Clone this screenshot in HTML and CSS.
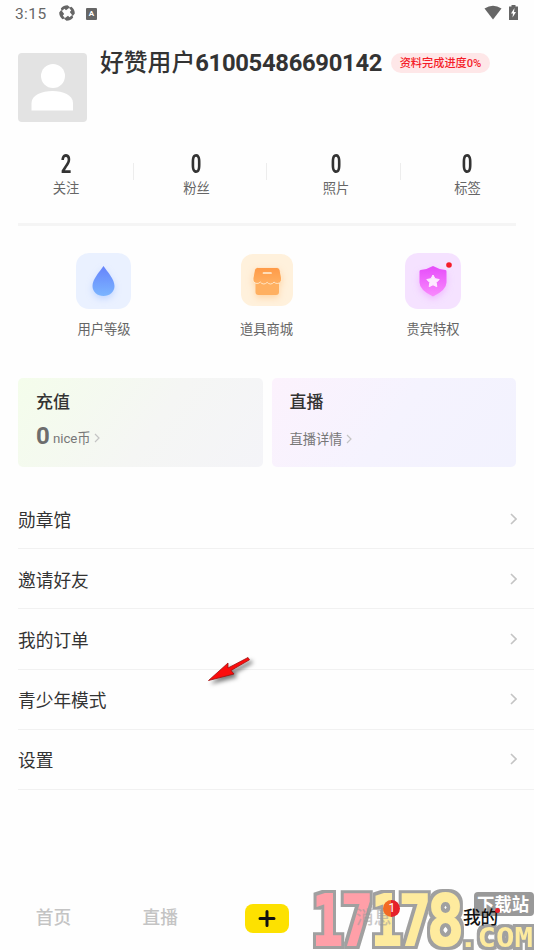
FILE: index.html
```
<!DOCTYPE html>
<html lang="zh-CN">
<head>
<meta charset="utf-8">
<title>我的</title>
<link rel="stylesheet" href="styles.css">
</head>
<body>
<div class="screen">
  <header class="status">
    <span class="time">3:15</span>
    <svg class="sync" viewBox="0 0 16 16"><g fill="#666"><path d="M1.800 3.500Q4.500.2 8.500.2L11 2.200 7 5.200 5.500 3.800 2.800 6z"/><path d="M12.500 1.800Q15.800 4.500 15.800 8.500L13.800 11 10.800 7 12.200 5.500 10 2.800z"/><path d="M14.200 12.500Q11.500 15.800 7.500 15.800L5 13.800 9 10.800 10.500 12.200 13.200 10z"/><path d="M3.500 14.200Q.2 11.500.2 7.500L2.200 5 5.200 9 3.800 10.500 6 13.200z"/></g></svg>
    <span class="abox">A</span>
    <svg class="wifi" viewBox="0 0 18 15"><path d="M.5 3.500Q9-2 17.500 3.500L9 14.500Z" fill="#666"/></svg>
    <svg class="battery" viewBox="0 0 9 15"><path d="M2.500 0h4v1.500H9V15H0V1.500h2.500z" fill="#666"/><path d="M5.500 3L2 8.500h2L3.500 12.500 7 7H5z" fill="#fff"/></svg>
  </header>

  <section class="profile">
    <svg class="avatar" viewBox="0 0 69 69"><rect width="69" height="69" rx="4" fill="#e3e3e3"/><circle cx="35" cy="23" r="12" fill="#fff"/><path d="M13.500 57.500V50C13.500 42 24 38 34.500 38S55 42 55 50v7.500z" fill="#fff"/></svg>
    <h1 class="name"><span class="cn">好赞用户</span><span class="id">61005486690142</span></h1>
    <span class="progress">资料完成进度0%</span>
  </section>

  <section class="stats">
    <div class="stat"><b>2</b><span>关注</span></div>
    <div class="stat second"><b>0</b><span>粉丝</span></div>
    <div class="stat third"><b>0</b><span>照片</span></div>
    <div class="stat"><b>0</b><span>标签</span></div>
  </section>
  <div class="bar"></div>

  <section class="features">
    <div class="feature">
      <div class="tile-box"><svg class="tile" viewBox="0 0 56 56"><defs><linearGradient id="drop" x2="0" y2="1"><stop stop-color="#6683fb"/><stop offset="1" stop-color="#7bb5ff"/></linearGradient></defs><rect width="55" height="56" rx="13" fill="#eaf1ff"/><path class="glow-blue" d="M27.500 13C23.500 19 16.500 26 16.500 33c0 6 5 10 11 10s11-4 11-10c0-7-7-14-11-20z" fill="url(#drop)"/></svg></div>
      <span>用户等级</span>
    </div>
    <div class="feature">
      <div class="tile-box"><svg class="tile small" viewBox="0 0 52 52"><defs><linearGradient id="shop" x2="0" y2="1"><stop stop-color="#ff9a47"/><stop offset="1" stop-color="#ffb062"/></linearGradient></defs><rect width="52" height="52" rx="12" fill="#fff1dc"/><g class="glow-orange"><path d="M14.500 27h23.500v11q0 3-3 3h-17.500q-3 0-3-3z" fill="#ffb061"/><path d="M16.500 13.500H36q2.500 0 3 2.500l1.500 8q.5 5-4 5.500-2.300 0-3.500-1.500-1.500 2-3.500 2t-3.300-1.700Q24.500 30 22.800 30q-2.200 0-3.500-2Q18 29.500 16 29.500q-4.500-.5-4-5.500l1.500-8q.5-2.500 3-2.500z" fill="url(#shop)" stroke="#fff1dc" stroke-width=".8"/></g><path d="M22.500 19h7.500" stroke="#fff1dc" stroke-width="1.700" stroke-linecap="round"/></svg></div>
      <span>道具商城</span>
    </div>
    <div class="feature">
      <div class="tile-box"><svg class="tile" viewBox="0 0 56 56"><defs><linearGradient id="shield" x2="0" y2="1"><stop stop-color="#e64bfa"/><stop offset="1" stop-color="#f98bfd"/></linearGradient></defs><rect width="56" height="56" rx="13" fill="#f5e2ff"/><path class="glow-pink" d="M28 13q6 3.500 12.500 4 1 0 1 1.500v11Q41.500 37 28 43.500 14.500 37 14.500 29.500v-11q0-1.500 1-1.500Q22 16.500 28 13z" fill="url(#shield)"/><path d="M28 22l2 3.700 4.200.8-3 3 .6 4.200-3.800-1.900-3.800 1.900.6-4.200-3-3 4.200-.8z" fill="#fdeaff" stroke="#fdeaff" stroke-width="1" stroke-linejoin="round"/><circle cx="44" cy="12" r="2.800" fill="#f51d29"/></svg></div>
      <span>贵宾特权</span>
    </div>
  </section>

  <section class="cards">
    <div class="card recharge">
      <h2>充值</h2>
      <p><b>0</b><span>nice币</span><svg class="mini" viewBox="0 0 6 10"><path d="M1 1l4 4-4 4"/></svg></p>
    </div>
    <div class="card live">
      <h2>直播</h2>
      <p><span>直播详情</span><svg class="mini" viewBox="0 0 6 10"><path d="M1 1l4 4-4 4"/></svg></p>
    </div>
  </section>

  <ul class="menu">
    <li><span>勋章馆</span><svg class="chev" viewBox="0 0 7 12"><path d="M1 1l5 5-5 5"/></svg></li>
    <li><span>邀请好友</span><svg class="chev" viewBox="0 0 7 12"><path d="M1 1l5 5-5 5"/></svg></li>
    <li><span>我的订单</span><svg class="chev" viewBox="0 0 7 12"><path d="M1 1l5 5-5 5"/></svg></li>
    <li><span>青少年模式</span><svg class="chev" viewBox="0 0 7 12"><path d="M1 1l5 5-5 5"/></svg></li>
    <li><span>设置</span><svg class="chev" viewBox="0 0 7 12"><path d="M1 1l5 5-5 5"/></svg></li>
  </ul>

  <svg class="pointer" viewBox="0 0 50 34"><path d="M1.500 25.500L21 8v5L41 2.500l1.500 2.300L24 15.500l3 3.500z" fill="#fb0c0c" stroke="#a01010" stroke-width=".8" stroke-linejoin="round"/></svg>

  <svg class="watermark" viewBox="0 0 226 65">
    <defs>
      <filter id="edge" x="-10%" y="-20%" width="120%" height="140%" color-interpolation-filters="sRGB">
        <feMorphology in="SourceAlpha" operator="dilate" radius="2.500" result="wide"/>
        <feFlood flood-color="#a0a0a0"/>
        <feComposite in2="wide" operator="in" result="outline"/>
        <feMerge><feMergeNode in="outline"/><feMergeNode in="SourceGraphic"/></feMerge>
      </filter>
    </defs>
    <g class="digits" filter="url(#edge)">
      <text class="pink" x="4" y="60" textLength="31" lengthAdjust="spacingAndGlyphs">1</text>
      <text class="pink" x="33" y="60" textLength="32" lengthAdjust="spacingAndGlyphs">7</text>
      <text x="63" y="60" textLength="31" lengthAdjust="spacingAndGlyphs">1</text>
      <text x="91" y="60" textLength="32" lengthAdjust="spacingAndGlyphs">7</text>
      <text x="119" y="60" textLength="37" lengthAdjust="spacingAndGlyphs">8</text>
    </g>
    <text class="com" filter="url(#edge)" x="151" y="61.500" textLength="74" lengthAdjust="spacingAndGlyphs">.COM</text>
    <rect x="166" y="7" width="60" height="24" rx="4" fill="#999"/>
    <text class="site" x="169" y="26" textLength="52" lengthAdjust="spacingAndGlyphs">下载站</text>
  </svg>

  <nav class="tabs">
    <span class="tab">首页</span>
    <span class="tab">直播</span>
    <span class="tab"><svg class="add" viewBox="0 0 44 29"><rect width="44" height="29" rx="8" fill="#fde100"/><path d="M22 7.500v14M15 14.500h14" stroke="#111" stroke-width="3" stroke-linecap="round"/></svg></span>
    <span class="tab faded">消息<i class="count">1</i></span>
    <span class="tab active">我的<i class="dot"></i></span>
  </nav>
</div>
</body>
</html>
```
FILE: styles.css
```
* { box-sizing: border-box; }
body {
  margin: 0;
  background: #fefefe;
  color: #333;
  font-family: Roboto, "Noto Sans CJK SC", sans-serif;
}
h1, h2, p, ul { margin: 0; padding: 0; }
svg { display: block; flex: none; }
.screen {
  position: relative;
  width: 534px;
  height: 950px;
  overflow: hidden;
  display: flex;
  flex-direction: column;
}
.status {
  height: 53px;
  padding: 5px 16px 0 15px;
  display: flex;
  align-items: flex-start;
  color: #666;
}
.time { width: 44px; font-size: 15.5px; line-height: 19px; letter-spacing: .4px; }
.sync { width: 16px; height: 16px; }
.abox {
  width: 11px; height: 12px; margin: 3px 0 0 11px;
  background: #666; color: #fff; border-radius: 1px;
  font-size: 8px; font-weight: 700; line-height: 12px; text-align: center;
}
.wifi { width: 18px; height: 15px; margin-left: auto; }
.battery { width: 9px; height: 15px; margin-left: 7px; }
.profile { height: 69px; padding-left: 18px; display: flex; align-items: flex-start; }
.avatar { width: 69px; height: 69px; }
.name {
  width: 291px; padding-left: 13px; margin-top: -7px;
  font-size: 23.8px; line-height: 34px; font-weight: 700; white-space: nowrap;
}
.cn { font-weight: 500; }
.id { letter-spacing: -.3px; }
.progress {
  width: 99px; height: 20px; margin-left: 13px;
  border-radius: 10px; background: #fee7e8; color: #f51d29;
  font-size: 11.2px; font-weight: 500; line-height: 21px; text-align: center;
}
.stats { height: 101px; padding-top: 29px; display: grid; grid-template-columns: 134px 133px 134px 133px; }
.stat {
  height: 50px; display: flex; flex-direction: column; align-items: center;
  background: linear-gradient(#ededed, #ededed) right 12px / 1px 17px no-repeat;
}
.stat:first-child { padding-right: 2px; }
.stat:last-child { background: none; }
.second { padding-right: 8px; }
.third { padding-left: 4px; }
.stat b { font-size: 25px; line-height: 28px; transform: scaleX(.74); }
.stat span { font-size: 13.3px; line-height: 20px; color: #666; }
.bar { height: 3px; margin: 0 18px; background: #f5f5f5; }
.features { height: 152px; padding: 27px 19px 0 22px; display: flex; justify-content: space-between; }
.feature { width: 164px; display: flex; flex-direction: column; align-items: center; font-size: 13.3px; color: #666; }
.feature:nth-child(2) { padding-right: 4px; }
.feature span { line-height: 20px; margin-top: 11px; }
.tile-box { height: 56px; }
.tile { width: 56px; height: 56px; }
.small { width: 52px; height: 52px; margin-top: 1px; }
.glow-blue { filter: drop-shadow(0 3px 3px #9ebeff80); }
.glow-orange { filter: drop-shadow(0 3px 3px #ffbe7880); }
.glow-pink { filter: drop-shadow(0 3px 3px #eb96ff80); }
.cards { height: 89px; margin: 0 18px; display: grid; grid-template-columns: 1fr 1fr; gap: 9px; }
.card { padding: 11px 18px; border-radius: 5px; }
.recharge { background: linear-gradient(125deg, #f4fdeb, #f5f6f4 55%, #f4f4f8); }
.live { background: linear-gradient(125deg, #fcf2fd, #f5f3fe 50%, #f2f2fe); }
.card h2 { font-size: 17px; line-height: 26px; font-weight: 500; }
.card p { height: 30px; margin-top: 6px; display: flex; align-items: center; font-size: 13.3px; line-height: 20px; color: #777; }
.card p b { width: 13px; font-size: 24px; line-height: 30px; margin-right: 4px; color: #6d6d6d; }
.card p span { padding-top: 5px; letter-spacing: -.1px; }
.live p { margin-top: 7px; }
.mini { width: 6px; height: 10px; margin: 3px 0 0 4px; fill: none; stroke: #c4c4c4; stroke-width: 1.2; }
.menu { list-style: none; margin: 22px 0 0 18px; }
.menu li {
  height: 60.2px; padding-right: 17px; border-bottom: 1px solid #f1f1f1;
  display: flex; align-items: center; justify-content: space-between;
  font-size: 17.7px; line-height: 26px;
}
.menu span { padding-top: 4px; }
.chev { width: 7px; height: 12px; fill: none; stroke: #c4c4c4; stroke-width: 1.6; }
.pointer { position: absolute; left: 207px; top: 655px; width: 50px; height: 34px; filter: drop-shadow(3px 3px 2px #0008); overflow: visible; }
.watermark { position: absolute; left: 308px; top: 885px; width: 226px; height: 65px; }
.digits text, .com {
  font-family: "DejaVu Sans Mono", monospace; font-weight: 700;
  fill: #feeb9e; stroke: #feeb9e; stroke-width: 2px;
}
.digits text { font-size: 70px; }
.digits .pink { fill: #ff9fa8; stroke: #ff9fa8; }
.com { font-size: 26px; stroke-width: 0; }
.site { font-family: "Noto Sans CJK SC", sans-serif; font-size: 18px; font-weight: 700; fill: #fff; }
.tabs {
  position: relative; height: 64px; margin-top: auto;
  display: grid; grid-template-columns: repeat(5, 1fr);
  font-size: 17.7px; line-height: 64px; font-weight: 500; color: #c4c4c4;
}
.tab { position: relative; height: 64px; display: flex; align-items: center; justify-content: center; }
.add { width: 44px; height: 29px; margin-top: 1px; }
.faded { color: #9998; }
.active { color: #111; }
.count {
  position: absolute; left: 63px; top: 14px; width: 17px; height: 17px; border-radius: 50%;
  background: linear-gradient(90deg, #f26a23 48%, #e5202a 49%);
  color: #fff; font-size: 12px; line-height: 17px; font-style: normal; font-weight: 400; text-align: center;
}
.dot { position: absolute; left: 68px; top: 22px; width: 5px; height: 5px; border-radius: 50%; background: #e5202a; }
```
